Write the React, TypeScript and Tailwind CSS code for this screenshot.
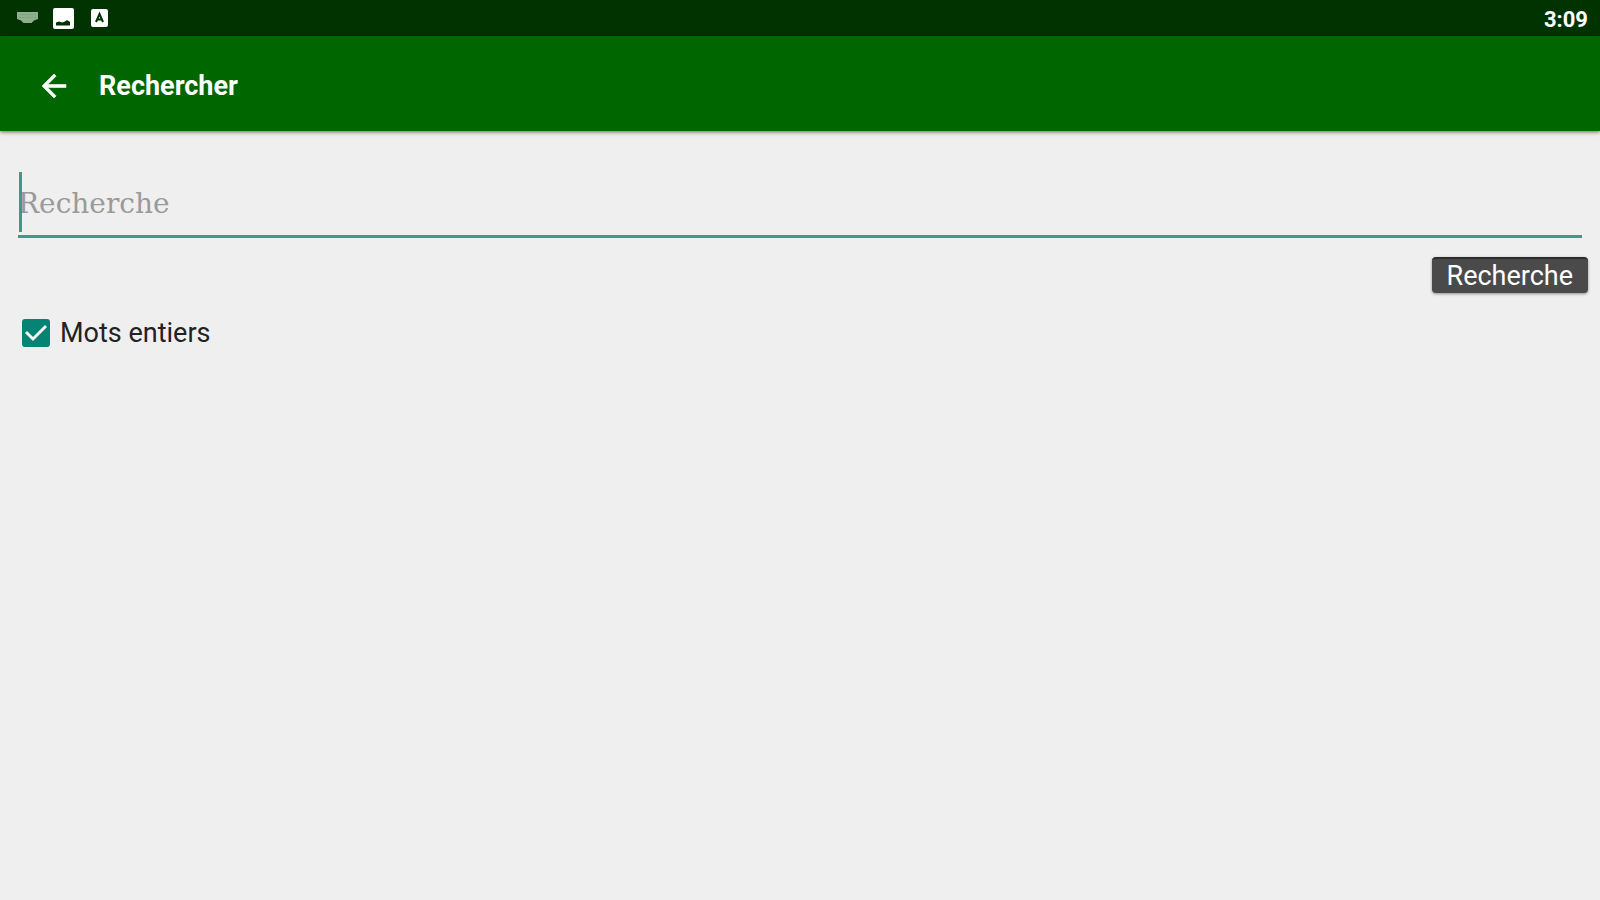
import { useState } from 'react'

function StatusBar() {
  return (
    <div className="flex h-9 items-center justify-between bg-[#003300] pt-1 pr-3 pl-4 text-white">
      <div className="flex items-center gap-3">
        <svg className="h-6 w-6" viewBox="0 0 24 24" fill="none">
          <path d="M1 4h21v7l-4 1.500-2.500 2.500h-8L5 12.500 1 11z" fill="#8fb08f" />
          <path d="M3 6.500h17M3 9.500h17" stroke="#7da07d" strokeDasharray="2 1" />
        </svg>
        <svg className="h-6 w-6" viewBox="0 0 24 24">
          <rect x="1" y="0" width="21" height="21" rx="2" fill="#fff" />
          <path d="M4 17.500v-3l3-1 3 1 3-1 2-1.500 3 2v3.500z" fill="#003300" />
        </svg>
        <svg className="h-6 w-6" viewBox="0 0 24 24">
          <rect x="3" y="1" width="17" height="18" rx="2" fill="#fff" />
          <path
            d="M8 14l3.500-8 3.500 8M9 11.500h5"
            fill="none"
            stroke="#003300"
            strokeWidth="2"
          />
        </svg>
      </div>
      <span className="text-[22px] leading-6 font-bold">3:09</span>
    </div>
  )
}

function AppBar() {
  return (
    <header className="flex h-[95px] items-center gap-[27px] bg-[#006600] pt-1 pl-9 text-white shadow-[0_1px_4px_rgba(0,0,0,0.6)]">
      <button type="button" aria-label="Retour" className="h-9 w-9">
        <svg viewBox="0 0 24 24" fill="currentColor" stroke="currentColor" strokeWidth="0.4">
          <path d="M20 11H7.830l5.590-5.590L12 4l-8 8 8 8 1.410-1.410L7.830 13H20v-2z" />
        </svg>
      </button>
      <h1 className="text-[27px] leading-8 font-bold">Rechercher</h1>
    </header>
  )
}

export default function App() {
  const [query, setQuery] = useState('')
  const [wholeWords, setWholeWords] = useState(true)

  return (
    <div className="min-h-screen bg-[#efefef] font-['Roboto',sans-serif]">
      <StatusBar />
      <AppBar />

      <form className="flex flex-col pt-[41px]" onSubmit={e => e.preventDefault()}>
        <div className="relative mx-[18px] border-b-3 border-[#409888]">
          {!query && <span className="absolute top-0 left-px h-[60px] w-[3px] bg-[#409888]" />}
          <input
            type="text"
            aria-label="Recherche"
            placeholder="Recherche"
            value={query}
            onChange={e => setQuery(e.target.value)}
            className="block h-[63px] w-full bg-transparent font-['DejaVu_Serif',serif] text-[28px] text-[#222] outline-none placeholder:text-[#9a9a9a]"
          />
        </div>

        <button
          type="submit"
          className="mt-[19px] mr-3 h-9 self-end rounded-sm border-t-2 border-[#2c2c2c] bg-[#4a4a4a] px-[15px] text-[27px] leading-8 text-white shadow-[0_1px_3px_rgba(0,0,0,0.4)]"
        >
          Recherche
        </button>

        <label className="mt-6 ml-[22px] flex items-center gap-[10px] self-start text-[27px] leading-8 text-[#222]">
          <span className="relative flex">
            <input
              type="checkbox"
              checked={wholeWords}
              onChange={e => setWholeWords(e.target.checked)}
              className="h-7 w-7 appearance-none rounded-[3px] border-2 border-[#757575] checked:border-[#068373] checked:bg-[#068373]"
            />
            {wholeWords && (
              <svg className="pointer-events-none absolute inset-0" viewBox="0 0 28 28" fill="none">
                <path d="M4 13l7 7L24 7" stroke="#f2f2f2" strokeWidth="3" />
              </svg>
            )}
          </span>
          Mots entiers
        </label>
      </form>
    </div>
  )
}
